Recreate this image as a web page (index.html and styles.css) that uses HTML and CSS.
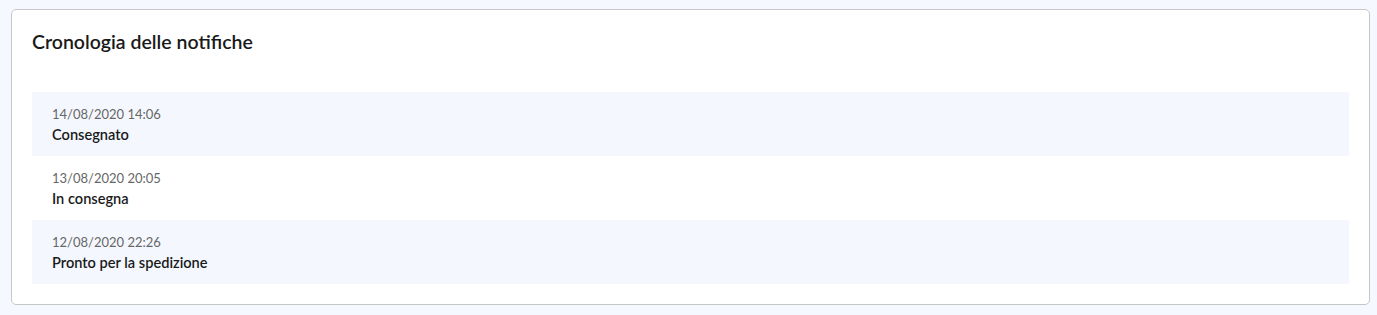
FILE: index.html
```html
<!DOCTYPE html>
<html lang="it">
<head>
<meta charset="utf-8">
<title>Cronologia delle notifiche</title>
<link rel="stylesheet" href="styles.css">
</head>
<body>
<section class="card">
  <h2 class="card-title">Cronologia delle notifiche</h2>
  <ul class="timeline">
    <li class="entry">
      <div class="entry-date">14/08/2020 14:06</div>
      <div class="entry-status">Consegnato</div>
    </li>
    <li class="entry">
      <div class="entry-date">13/08/2020 20:05</div>
      <div class="entry-status">In consegna</div>
    </li>
    <li class="entry">
      <div class="entry-date">12/08/2020 22:26</div>
      <div class="entry-status">Pronto per la spedizione</div>
    </li>
  </ul>
</section>
</body>
</html>
```

FILE: styles.css
```css
html, body {
  margin: 0;
  padding: 0;
  background: #f5f9ff;
}
body {
  font-family: "Lato", "Open Sans", sans-serif;
  color: #1b1b1b;
  padding: 9px 7px 10px 11px;
}
.card {
  background: #ffffff;
  border: 1px solid #c6c6c6;
  border-radius: 5px;
  padding: 20px 20px 20px 20px;
}
.card-title {
  margin: 0 0 38px 0;
  font-size: 19.5px;
  line-height: 24px;
  font-weight: 600;
  color: #1a1a1a;
}
.timeline {
  list-style: none;
  margin: 0;
  padding: 0;
}
.entry {
  padding: 12px 20px;
}
.entry:nth-child(odd) {
  background: #f4f8fe;
}
.entry-date {
  font-size: 13px;
  line-height: 20px;
  color: #666666;
}
.entry-status {
  font-size: 14.6px;
  line-height: 22px;
  margin-bottom: -2px;
  font-weight: 600;
  color: #1a1a1a;
}
```
